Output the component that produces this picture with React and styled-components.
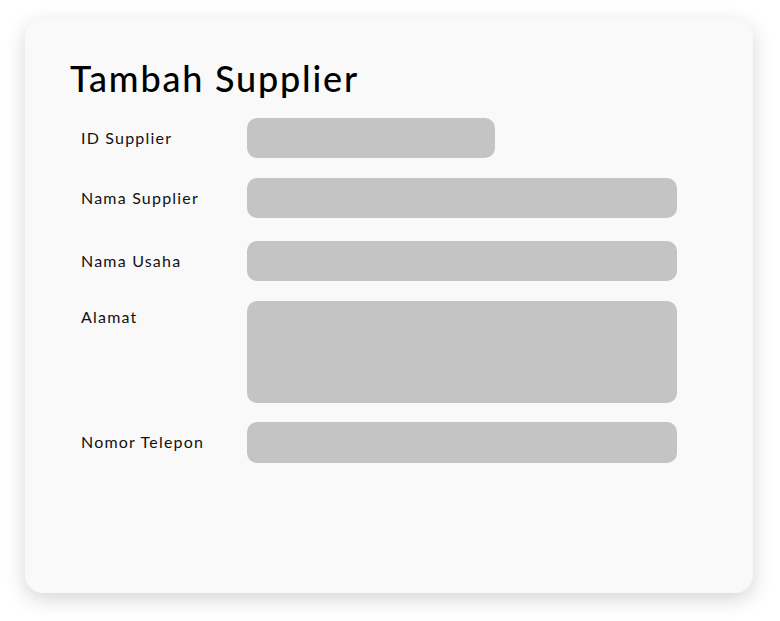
import React from "react";
import styled, { createGlobalStyle } from "styled-components";

const Global = createGlobalStyle`
  html, body { margin: 0; padding: 0; background: #ffffff; }
  body { font-family: "Lato", "Noto Sans", sans-serif; color: #000; }
`;

const Page = styled.div`
  padding: 19px 27px 28px 25px;
  width: 780px;
  box-sizing: border-box;
`;

const Card = styled.div`
  width: 728px;
  height: 574px;
  box-sizing: border-box;
  background: #f9f9f9;
  border-radius: 18px;
  box-shadow: 0 6px 20px rgba(0, 0, 0, 0.17);
  padding: 37px 76px 0 45px;
`;

const Title = styled.h1`
  margin: 0 0 18px;
  font-size: 36px;
  font-weight: 500;
  line-height: 44px;
  letter-spacing: 1.8px;
`;

const Form = styled.div`
  display: grid;
  grid-template-columns: 166px 1fr;
  padding-left: 11px;
`;

const Label = styled.label`
  font-size: 16px;
  font-weight: 400;
  line-height: ${(p) => (p.$top ? "32px" : "40px")};
  margin-top: ${(p) => p.$mt || 0}px;
  letter-spacing: 1.2px;
  color: #111;
`;

const Field = styled.div`
  width: ${(p) => p.$w || 430}px;
  height: ${(p) => p.$h || 40}px;
  margin-top: ${(p) => p.$mt || 0}px;
  background: #c4c4c4;
  border-radius: 10px;
`;

const rows = [
  { label: "ID Supplier", w: 248, mt: 0 },
  { label: "Nama Supplier", mt: 20 },
  { label: "Nama Usaha", mt: 23 },
  { label: "Alamat", mt: 20, h: 102, top: true },
  { label: "Nomor Telepon", mt: 19, h: 41 },
];

export default function App() {
  return (
    <>
      <Global />
      <Page>
        <Card>
          <Title>Tambah Supplier</Title>
          <Form>
            {rows.map((r) => (
              <React.Fragment key={r.label}>
                <Label $mt={r.mt} $top={r.top}>{r.label}</Label>
                <Field $w={r.w} $h={r.h} $mt={r.mt} />
              </React.Fragment>
            ))}
          </Form>
        </Card>
      </Page>
    </>
  );
}
